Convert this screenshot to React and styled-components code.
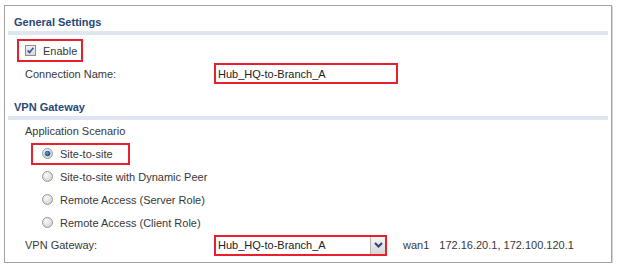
import React from 'react';
import styled, { createGlobalStyle } from 'styled-components';

const GlobalStyle = createGlobalStyle`
  body {
    margin: 0;
    background: #ffffff;
    font-family: "Liberation Sans", Arial, sans-serif;
    font-size: 11px;
    color: #383838;
  }
`;

const Panel = styled.div`
  box-sizing: border-box;
  margin: 5px 0 0 4px;
  width: 608px;
  height: 258px;
  border: 1px solid #a2a2a2;
  box-shadow: 1px 1px 0 #d6d6d6;
  padding: 0 3px 6px;
`;

const SectionTitle = styled.div`
  margin-top: ${({ $gap }) => $gap || 0}px;
  padding: 9px 0 2px 6px;
  line-height: 14px;
  font-weight: bold;
  color: #284878;
  border-bottom: 4px solid #e0e6f0;
`;

const Row = styled.div`
  display: flex;
  align-items: center;
  height: ${({ $h }) => $h || 23}px;
  padding-left: ${({ $indent }) => $indent || 17}px;
  margin-top: ${({ $top }) => $top || 0}px;
`;

const Highlight = styled.div`
  box-sizing: border-box;
  display: inline-flex;
  align-items: center;
  gap: 7px;
  height: ${({ $h }) => $h || 23}px;
  padding: 0 ${({ $right }) => $right || 4}px 0 ${({ $left }) => $left || 6}px;
  border: 2px solid ${({ $on }) => ($on ? '#e8202c' : 'transparent')};
`;

const Label = styled.span`
  width: ${({ $w }) => $w || 189}px;
  flex: none;
`;

const TextBox = styled.div`
  box-sizing: border-box;
  width: 184px;
  height: 21px;
  border: 2px solid #e8202c;
  padding-left: 2px;
  display: flex;
  align-items: center;
  color: #222;
`;

const Select = styled.div`
  box-sizing: border-box;
  width: 173px;
  height: 21px;
  border: 2px solid #e8202c;
  display: flex;
  align-items: stretch;
  color: #222;
`;

const SelectText = styled.span`
  flex: 1;
  display: flex;
  align-items: center;
  padding-left: 2px;
`;

const SelectButton = styled.span`
  width: 14px;
  display: flex;
  align-items: center;
  justify-content: center;
  background: linear-gradient(#f6f6f6, #d4d6d8);
  border-left: 1px solid #b4b4b4;
`;

const Info = styled.span`
  margin-left: 16px;
  word-spacing: 0;
  & + & {
    margin-left: 10px;
  }
`;

const CheckBox = () => (
  <svg width="11" height="11" viewBox="0 0 11 11">
    <defs>
      <linearGradient id="cb" x1="0" y1="0" x2="0" y2="1">
        <stop offset="0" stopColor="#f4f4f4" />
        <stop offset="1" stopColor="#d8d8d8" />
      </linearGradient>
    </defs>
    <rect x="0.5" y="0.5" width="10" height="10" fill="url(#cb)" stroke="#8e8e8e" />
    <path d="M2.6 5.4 L4.6 7.6 L8.4 2.8" fill="none" stroke="#34599a" strokeWidth="1.6" />
  </svg>
);

const Radio = ({ checked }) => (
  <svg width="11" height="11" viewBox="0 0 11 11">
    <defs>
      <radialGradient id="rb" cx="0.4" cy="0.35" r="0.7">
        <stop offset="0" stopColor="#fbfbfb" />
        <stop offset="1" stopColor="#cfcfcf" />
      </radialGradient>
      <radialGradient id="rd" cx="0.4" cy="0.4" r="0.6">
        <stop offset="0" stopColor="#5aa0dc" />
        <stop offset="1" stopColor="#174a86" />
      </radialGradient>
    </defs>
    <circle cx="5.5" cy="5.5" r="5" fill="url(#rb)" stroke="#9a9a9a" />
    {checked && <circle cx="5.5" cy="5.5" r="2.8" fill="url(#rd)" />}
  </svg>
);

const Chevron = () => (
  <svg width="9" height="6" viewBox="0 0 9 6">
    <path d="M1 1 L4.5 4.5 L8 1" fill="none" stroke="#24457a" strokeWidth="2" />
  </svg>
);

const scenarios = [
  { name: 'Site-to-site', checked: true },
  { name: 'Site-to-site with Dynamic Peer' },
  { name: 'Remote Access (Server Role)' },
  { name: 'Remote Access (Client Role)' },
];

const App = () => (
  <>
    <GlobalStyle />
    <Panel>
      <SectionTitle>General Settings</SectionTitle>
      <Row $indent={9} $top={4}>
        <Highlight $on>
          <CheckBox />
          Enable
        </Highlight>
      </Row>
      <Row>
        <Label>Connection Name:</Label>
        <TextBox>Hub_HQ-to-Branch_A</TextBox>
      </Row>

      <SectionTitle $gap={6}>VPN Gateway</SectionTitle>
      <Row $h={22}>Application Scenario</Row>
      {scenarios.map((s) => (
        <Row key={s.name} $indent={23}>
          <Highlight $on={s.checked} $h={22} $left={9} $right={15}>
            <Radio checked={s.checked} />
            {s.name}
          </Highlight>
        </Row>
      ))}
      <Row $h={22}>
        <Label>VPN Gateway:</Label>
        <Select>
          <SelectText>Hub_HQ-to-Branch_A</SelectText>
          <SelectButton>
            <Chevron />
          </SelectButton>
        </Select>
        <Info>wan1</Info>
        <Info>172.16.20.1, 172.100.120.1</Info>
      </Row>
    </Panel>
  </>
);

export default App;
